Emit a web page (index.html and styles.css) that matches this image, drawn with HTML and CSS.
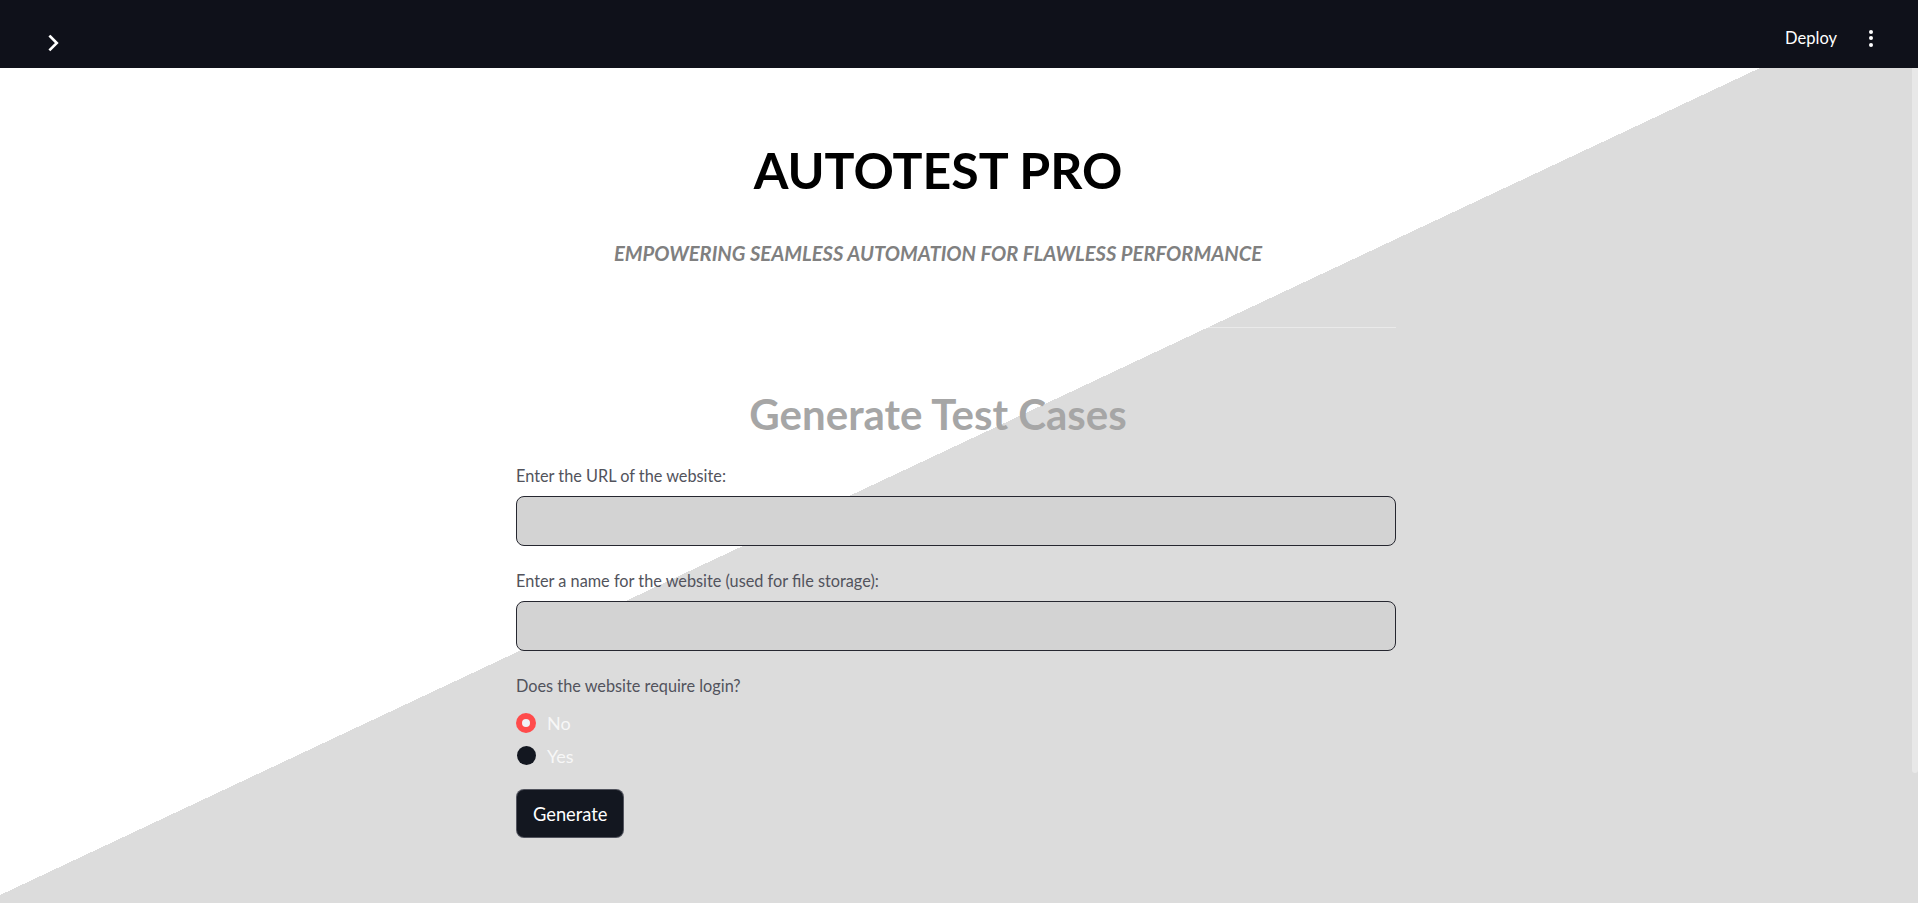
FILE: index.html
```html
<!DOCTYPE html>
<html lang="en">
<head>
<meta charset="utf-8">
<title>AutoTest Pro</title>
<link rel="stylesheet" href="styles.css">
</head>
<body>
<header class="topbar">
  <button class="sidebar-toggle" aria-label="Open sidebar">
    <svg width="26" height="26" viewBox="0 0 24 24" fill="none" stroke="#ffffff" stroke-width="2.4" stroke-linecap="square" stroke-linejoin="miter"><path d="M9.5 6l6 6-6 6"/></svg>
  </button>
  <div class="topbar-actions">
    <span class="deploy">Deploy</span>
    <span class="kebab" aria-label="Main menu"><i></i><i></i><i></i></span>
  </div>
</header>
<main class="app">
  <div class="block">
    <h1 class="title">AUTOTEST PRO</h1>
    <p class="subtitle">EMPOWERING SEAMLESS AUTOMATION FOR FLAWLESS PERFORMANCE</p>
    <hr class="divider">
    <h2 class="section-title">Generate Test Cases</h2>
    <label class="field-label">Enter the URL of the website:</label>
    <div class="text-input"></div>
    <label class="field-label second">Enter a name for the website (used for file storage):</label>
    <div class="text-input"></div>
    <p class="field-label second">Does the website require login?</p>
    <div class="radio-group">
      <div class="radio-row"><span class="radio checked"></span><span class="radio-text">No</span></div>
      <div class="radio-row"><span class="radio"></span><span class="radio-text">Yes</span></div>
    </div>
    <button class="primary-btn">Generate</button>
  </div>
  <div class="scroll-thumb"></div>
</main>
</body>
</html>
```
FILE: styles.css
```css
html, body {
  margin: 0;
  padding: 0;
  height: 100%;
  overflow: hidden;
}
body {
  font-family: "Lato", "Liberation Sans", sans-serif;
  background: #ffffff;
}
.topbar {
  height: 68px;
  background: #0f111a;
  display: flex;
  justify-content: space-between;
  align-items: flex-start;
  box-sizing: border-box;
  padding: 30px 44px 0 40px;
}
.sidebar-toggle {
  background: none;
  border: 0;
  padding: 0;
  width: 26px;
  height: 26px;
  display: block;
}
.sidebar-toggle svg { display: block; }
.topbar-actions {
  display: flex;
  align-items: center;
  gap: 31px;
  margin-top: 0;
  height: 16px;
}
.deploy {
  color: #ffffff;
  font-size: 16.5px;
  line-height: 16px;
}
.kebab {
  display: flex;
  flex-direction: column;
  gap: 2.5px;
  width: 6px;
  align-items: center;
}
.kebab i {
  display: block;
  width: 4px;
  height: 4px;
  border-radius: 50%;
  background: #ffffff;
}
.app {
  position: relative;
  height: 835px;
  background: linear-gradient(154.83deg, #ffffff 748.5px, #dcdcdc 748.5px);
}
.block {
  width: 880px;
  margin-left: 516px;
  padding-top: 70px;
  display: flex;
  flex-direction: column;
  align-items: flex-start;
}
.title {
  align-self: stretch;
  margin: 0;
  padding-right: 36px;
  text-align: center;
  font-size: 50px;
  line-height: 64px;
  font-weight: 700;
  color: #000000;
}
.subtitle {
  align-self: stretch;
  margin: 36px 0 0 0;
  padding-right: 36px;
  text-align: center;
  font-size: 20.2px;
  line-height: 30px;
  font-style: italic;
  font-weight: 700;
  color: #808080;
}
.divider {
  align-self: stretch;
  margin: 59px 0 0 0;
  border: 0;
  height: 1px;
  background: rgba(255, 255, 255, 0.4);
}
.section-title {
  align-self: stretch;
  margin: 61px 0 0 0;
  padding-right: 36px;
  text-align: center;
  font-size: 42px;
  line-height: 50px;
  font-weight: 700;
  color: #a6a6a6;
}
.field-label {
  display: block;
  margin: 27px 0 0 0;
  font-size: 16.3px;
  line-height: 20px;
  color: #52535c;
}
.field-label.second { margin-top: 25px; }
.text-input {
  align-self: stretch;
  box-sizing: border-box;
  height: 50px;
  margin-top: 10px;
  background: #d3d3d3;
  border: 1px solid #262730;
  border-radius: 8px;
}
.radio-group {
  margin-top: 10px;
  display: flex;
  flex-direction: column;
}
.radio-row {
  height: 33px;
  display: flex;
  align-items: center;
  gap: 11px;
}
.radio {
  box-sizing: border-box;
  width: 19px;
  height: 19px;
  margin-left: 1px;
  border-radius: 50%;
  background: #131720;
  display: flex;
  align-items: center;
  justify-content: center;
}
.radio.checked {
  width: 20px;
  height: 20px;
  margin-left: 0;
  background: #ff4b4b;
}
.radio.checked::after {
  content: "";
  width: 8px;
  height: 8px;
  border-radius: 50%;
  background: #f0f2f6;
}
.radio-text {
  font-size: 18px;
  line-height: 22px;
  color: #f7f7f7;
}
.primary-btn {
  margin-top: 17px;
  box-sizing: border-box;
  height: 49px;
  padding: 0 16px;
  background: #131720;
  border: 1px solid rgba(160, 160, 170, 0.45);
  border-radius: 8px;
  color: #ffffff;
  font-family: inherit;
  font-size: 18.3px;
}
.scroll-thumb {
  position: absolute;
  right: 0;
  top: 0;
  width: 6px;
  height: 705px;
  border-radius: 0 0 3px 3px;
  background: #e8e8e8;
}
```
